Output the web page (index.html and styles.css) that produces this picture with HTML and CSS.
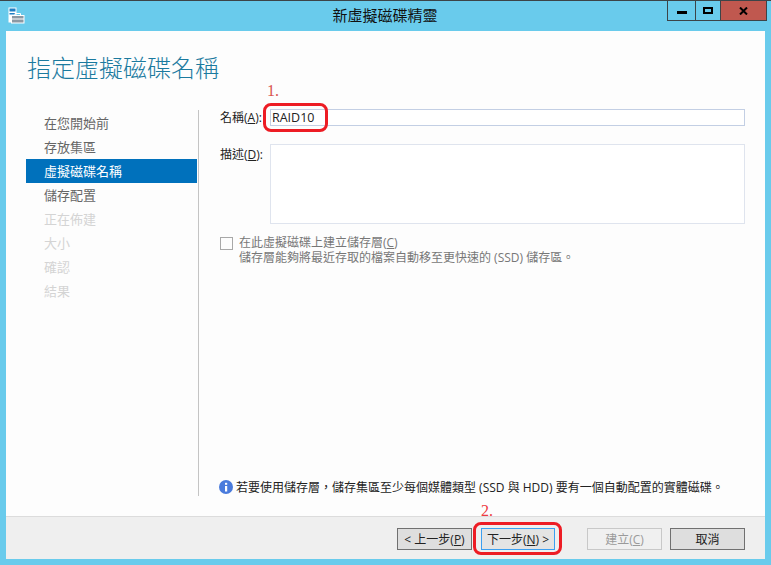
FILE: index.html
```html
<!DOCTYPE html>
<html lang="zh-Hant">
<head>
    <meta charset="UTF-8">
    <title>新虛擬磁碟精靈</title>
    <link rel="stylesheet" href="styles.css">
</head>
<body>
    <div class="window">
        <div class="titlebar">
            <svg class="app-icon" width="17" height="17" viewBox="0 0 17 17">
                <rect x="0.5" y="0.5" width="8" height="15" fill="#fff"/>
                <rect x="1.5" y="1.5" width="6" height="3" fill="#1f7fc4"/>
                <rect x="1.5" y="6" width="6" height="1.5" fill="#1f7fc4"/>
                <rect x="3.5" y="8.5" width="12.5" height="7.5" fill="#8b98a3" stroke="#fff"/>
                <path d="M7 8.5V6.5h5.5v2M3.5 12H16" fill="none" stroke="#fff"/>
            </svg>
            <div class="title">新虛擬磁碟精靈</div>
            <div class="controls">
                <div class="ctl ctl-min"><span class="min-glyph"></span></div>
                <div class="ctl ctl-max"><span class="max-glyph"></span></div>
                <div class="ctl ctl-close">
                    <svg width="9" height="8" viewBox="0 0 9 8"><path d="M1 0.5L8 7.5M8 0.5L1 7.5" stroke="#000" stroke-width="2" fill="none"/></svg>
                </div>
            </div>
        </div>

        <div class="panel">
            <div class="body">
                <h1 class="heading">指定虛擬磁碟名稱</h1>
                <div class="columns">
                    <ul class="steps">
                        <li>在您開始前</li>
                        <li>存放集區</li>
                        <li class="active">虛擬磁碟名稱</li>
                        <li>儲存配置</li>
                        <li class="off">正在佈建</li>
                        <li class="off">大小</li>
                        <li class="off">確認</li>
                        <li class="off">結果</li>
                    </ul>
                    <div class="main">
                        <div class="form">
                            <div class="row row-name">
                                <label class="field-label">名稱(<u>A</u>):</label>
                                <input class="text-input" type="text" value="RAID10">
                            </div>
                            <div class="row row-desc">
                                <label class="field-label">描述(<u>D</u>):</label>
                                <div class="text-area"></div>
                            </div>
                            <div class="check-row">
                                <span class="check-box"></span>
                                <div class="check-text">
                                    <div>在此虛擬磁碟上建立儲存層(<u>C</u>)</div>
                                    <div>儲存層能夠將最近存取的檔案自動移至更快速的 (SSD) 儲存區。</div>
                                </div>
                            </div>
                        </div>
                        <div class="note">
                            <svg width="14" height="14" viewBox="0 0 14 14">
                                <circle cx="7" cy="7" r="7" fill="#4a7bdc"/>
                                <rect x="6" y="6" width="2.2" height="5.5" fill="#fff"/>
                                <rect x="6" y="2.8" width="2.2" height="2" fill="#fff"/>
                            </svg>
                            <span>若要使用儲存層，儲存集區至少每個媒體類型 (SSD 與 HDD) 要有一個自動配置的實體磁碟。</span>
                        </div>
                    </div>
                </div>
            </div>
            <div class="footer">
                <button class="btn">&lt; 上一步(<u>P</u>)</button>
                <button class="btn btn-focus">下一步(<u>N</u>) &gt;</button>
                <button class="btn btn-disabled">建立(<u>C</u>)</button>
                <button class="btn">取消</button>
            </div>
        </div>

        <!-- red annotations drawn over the screenshot -->
        <span class="mark mark-1">1.</span>
        <span class="ring ring-1"></span>
        <span class="mark mark-2">2.</span>
        <span class="ring ring-2"></span>
    </div>
</body>
</html>
```

FILE: styles.css
```css
html, body {
    margin: 0;
    padding: 0;
}
body {
    font-family: "Open Sans", "Noto Sans CJK TC", sans-serif;
    font-size: 12px;
    color: #222;
}
.window {
    position: relative;
    width: 771px;
    height: 565px;
    box-sizing: border-box;
    background-color: #69cbec;
    border-top: 1px solid #3c4448;
    padding: 0 6px 6px;
    display: flex;
    flex-direction: column;
    overflow: hidden;
}
.titlebar {
    height: 30px;
    flex: none;
    display: flex;
    align-items: flex-start;
    margin-left: 2px;
}
.app-icon {
    margin-top: 6px;
}
.title {
    flex: 1;
    text-align: center;
    font-size: 15px;
    line-height: 28px;
    color: #111;
    padding-left: 78px;
}
.controls {
    display: flex;
    margin-right: -2px;
}
.ctl {
    height: 20px;
    box-sizing: border-box;
    border: 1px solid #3c4448;
    border-top: 0;
    display: flex;
    align-items: center;
    justify-content: center;
}
.ctl-min {
    width: 29px;
}
.ctl-max {
    width: 26px;
    margin-left: -1px;
}
.ctl-close {
    width: 47px;
    margin-left: -1px;
    background-color: #c0584f;
}
.min-glyph {
    width: 10px;
    height: 3px;
    background-color: #000;
    margin-top: 4px;
}
.max-glyph {
    width: 6px;
    height: 3px;
    border: 2px solid #000;
}
.panel {
    flex: 1;
    display: flex;
    flex-direction: column;
    background-color: #fdfdfd;
}
.body {
    flex: 1;
    display: flex;
    flex-direction: column;
    padding: 0 20px;
    min-height: 0;
}
.heading {
    margin: 0;
    padding-left: 1px;
    height: 79px;
    font-size: 24px;
    line-height: 74px;
    font-weight: 300;
    color: #1b7a9f;
    box-sizing: border-box;
    flex: none;
}
.columns {
    display: flex;
    height: 386px;
}
.steps {
    list-style: none;
    margin: 0;
    padding: 0;
    width: 171px;
    flex: none;
    padding-top: 1px;
    font-size: 13px;
    color: #666;
}
.steps li {
    height: 24px;
    line-height: 24px;
    padding-left: 18px;
}
.steps li.active {
    background-color: #0071bc;
    color: #fff;
}
.steps li.off {
    color: #d4d4d4;
}
.main {
    flex: 1;
    border-left: 1px solid #c4c4c4;
    margin-left: 1px;
    padding-left: 21px;
    display: flex;
    flex-direction: column;
    justify-content: space-between;
}
.row {
    display: flex;
}
.field-label {
    width: 50px;
    flex: none;
    line-height: 17px;
    color: #222;
}
.row-name {
    margin-bottom: 18px;
    margin-top: -1px;
}
.text-input {
    width: 475px;
    height: 17px;
    box-sizing: border-box;
    border: 1px solid #c3cfe4;
    padding: 0 2px 0 1px;
    font: inherit;
    font-size: 12.5px;
    color: #222;
    background-color: #fff;
    outline: none;
}
.row-desc .field-label {
    line-height: 22px;
}
.text-area {
    width: 475px;
    height: 80px;
    box-sizing: border-box;
    border: 1px solid #dfe4ee;
    background-color: #fff;
}
.check-row {
    display: flex;
    margin-top: 13px;
    color: #777;
}
.check-box {
    width: 13px;
    height: 13px;
    box-sizing: border-box;
    border: 1px solid #a8a8a8;
    flex: none;
    margin-right: 6px;
}
.check-text {
    line-height: 15px;
    margin-top: -2px;
}
.note {
    display: flex;
    align-items: center;
    gap: 3px;
    margin-left: -1px;
    height: 16px;
    margin-top: auto;
    color: #222;
    position: relative;
    top: -1px;
}
.footer {
    height: 43px;
    flex: none;
    box-sizing: border-box;
    background-color: #efefef;
    border-top: 1px solid #dcdcdc;
    display: flex;
    align-items: center;
    padding-left: 391px;
    padding-top: 1px;
}
.btn {
    width: 75px;
    height: 22px;
    box-sizing: border-box;
    padding: 0;
    border: 1px solid #707070;
    background-color: #dedede;
    font: inherit;
    color: #222;
    margin-right: 9px;
}
.btn-focus {
    width: 74px;
    margin-right: 32px;
    border-color: #3c9ff0;
    background-color: #e4e4e4;
}
.btn-disabled {
    width: 75px;
    margin-right: 8px;
    color: #9a9a9a;
    border-color: #c8c8c8;
    background-color: #f0f0f0;
}
.ring {
    position: absolute;
    box-sizing: border-box;
    border: 3px solid #ed1c24;
    border-radius: 8px;
}
.ring-1 {
    left: 263px;
    top: 102px;
    width: 65px;
    height: 29px;
}
.ring-2 {
    left: 473px;
    top: 521px;
    width: 89px;
    height: 33px;
}
.mark {
    position: absolute;
    font-family: "Liberation Serif", serif;
    font-size: 16px;
    line-height: 18px;
}
.mark-1 {
    left: 267px;
    top: 81px;
    color: #d9534f;
}
.mark-2 {
    left: 481px;
    top: 501px;
    color: #ed3a40;
}
```
